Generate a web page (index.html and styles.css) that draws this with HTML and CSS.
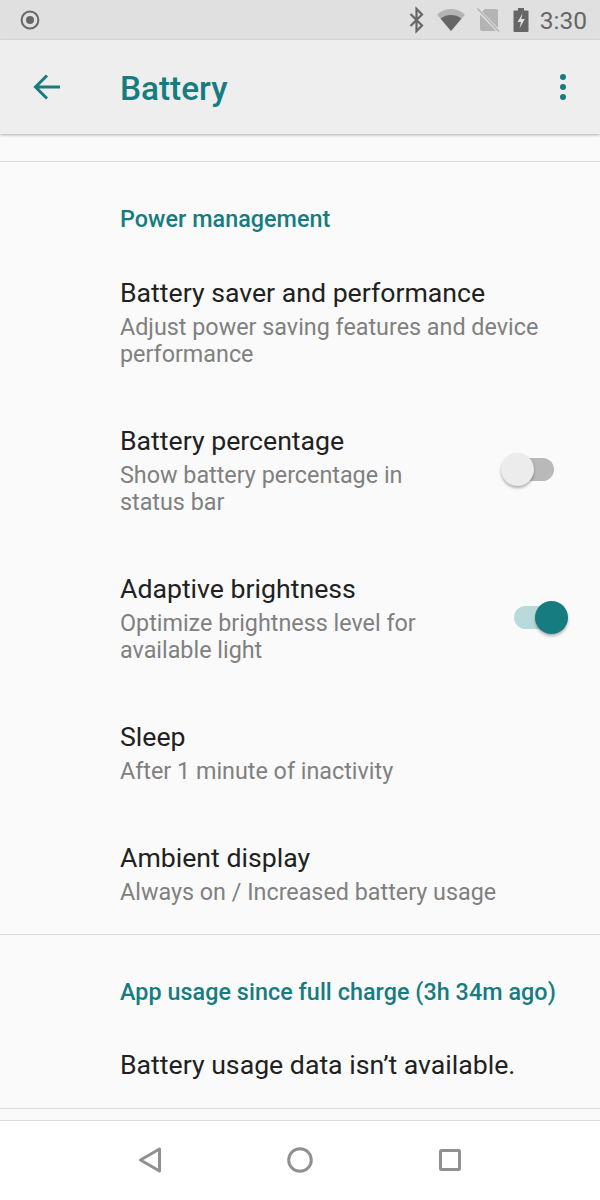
FILE: index.html
```html
<!DOCTYPE html>
<html>
<head>
  <link rel="stylesheet" href="styles.css">
</head>
<body>
  <div class="screen">
    <div class="status-bar">
      <svg class="status-dot" width="24" height="24" viewBox="0 0 24 24">
        <circle cx="12" cy="12" r="8.4" fill="none" stroke="#666" stroke-width="2"/>
        <circle cx="12" cy="12" r="4" fill="#666"/>
      </svg>
      <div class="status-right">
        <svg class="ic-bt" width="20" height="28" viewBox="0 0 20 28">
          <path d="M3.500 8L15 19.500 9.500 25V3L15 8.500 3.500 20" fill="none" stroke="#666" stroke-width="2.200"/>
        </svg>
        <svg class="ic-wifi" width="30" height="24" viewBox="0 0 30 24">
          <path d="M1 6.500C5 3 10 1 15 1s10 2 14 5.500L15 23z" fill="#b4b4b4"/>
          <path d="M4.500 10.500C8 8 11 7 15 7s7 1 10.500 3.500L15 23z" fill="#666"/>
        </svg>
        <svg class="ic-sim" width="24" height="26" viewBox="0 0 24 26">
          <path d="M9 2h11a2 2 0 0 1 2 2v17L6 4.500z M4 7.500l16 16.500H6a2 2 0 0 1-2-2z" fill="#b4b4b4"/>
          <path d="M1.500 1.500L23 24.500" stroke="#b4b4b4" stroke-width="1.500"/>
        </svg>
        <svg width="16" height="26" viewBox="0 0 16 26">
          <path d="M5 1h6v2.500h3.500a1 1 0 0 1 1 1V24a1 1 0 0 1-1 1h-13a1 1 0 0 1-1-1V4.500a1 1 0 0 1 1-1H5z" fill="#666"/>
          <path d="M9.500 6.500L4.500 15H8l-1.500 6.500L11.800 12H8.300z" fill="#e0e0e0"/>
        </svg>
        <span class="status-time">3:30</span>
      </div>
    </div>

    <div class="toolbar">
      <svg class="back" width="30" height="30" viewBox="0 0 30 30">
        <path d="M28 15H4M15 3.500L3.500 15 15 26.500" fill="none" stroke="#167c80" stroke-width="3"/>
      </svg>
      <div class="toolbar-title">Battery</div>
      <div class="overflow"><i></i><i></i><i></i></div>
    </div>

    <div class="content">
      <div class="section first">
        <div class="category">Power management</div>
        <div class="row">
          <div class="row-text wide">
            <div class="row-title">Battery saver and performance</div>
            <div class="row-sub">Adjust power saving features and device performance</div>
          </div>
        </div>
        <div class="row">
          <div class="row-text">
            <div class="row-title">Battery percentage</div>
            <div class="row-sub">Show battery percentage in<br>status bar</div>
          </div>
          <div class="switch off"><div class="track"></div><div class="thumb"></div></div>
        </div>
        <div class="row">
          <div class="row-text">
            <div class="row-title">Adaptive brightness</div>
            <div class="row-sub">Optimize brightness level for<br>available light</div>
          </div>
          <div class="switch on"><div class="track"></div><div class="thumb"></div></div>
        </div>
        <div class="row">
          <div class="row-text">
            <div class="row-title">Sleep</div>
            <div class="row-sub">After 1 minute of inactivity</div>
          </div>
        </div>
        <div class="row">
          <div class="row-text wide">
            <div class="row-title">Ambient display</div>
            <div class="row-sub">Always on / Increased battery usage</div>
          </div>
        </div>
      </div>
      <div class="section last">
        <div class="category">App usage since full charge (3h 34m ago)</div>
        <div class="row-title notice">Battery usage data isn’t available.</div>
      </div>
    </div>

    <div class="nav-bar">
      <svg width="28" height="28" viewBox="0 0 28 28">
        <path d="M23.500 3v22L4.500 14z" fill="none" stroke="#909090" stroke-width="3" stroke-linejoin="round"/>
      </svg>
      <svg width="28" height="28" viewBox="0 0 28 28">
        <circle cx="14" cy="14" r="11.300" fill="none" stroke="#909090" stroke-width="3"/>
      </svg>
      <svg width="28" height="28" viewBox="0 0 28 28">
        <rect x="4.500" y="4.500" width="19" height="19" rx="1" fill="none" stroke="#909090" stroke-width="3"/>
      </svg>
    </div>
  </div>
</body>
</html>
```
FILE: styles.css
```css
* {
  box-sizing: border-box;
}

body {
  margin: 0;
  background: #fafafa;
  font-family: Roboto, "Liberation Sans", sans-serif;
}

.screen {
  width: 600px;
  height: 1200px;
  display: flex;
  flex-direction: column;
  overflow: hidden;
}

.status-bar {
  height: 40px;
  flex: none;
  display: flex;
  align-items: center;
  justify-content: space-between;
  padding: 0 13px 0 18px;
  background: #e0e0e0;
}

.status-right {
  display: flex;
  align-items: center;
  gap: 11px;
}

.ic-bt {
  margin-right: -2px;
}

.ic-wifi {
  margin-right: -1px;
}

.ic-sim {
  margin-right: 2px;
}

.status-time {
  font-size: 24.500px;
  color: #666;
}

.toolbar {
  height: 94px;
  flex: none;
  display: flex;
  align-items: center;
  padding: 0 34px 0 32px;
  background: #eeeeee;
  box-shadow: 0 1px 3px rgba(0,0,0,0.3);
  position: relative;
}

.toolbar-title {
  flex: 1;
  margin-left: 58px;
  font-size: 33.330px;
  font-weight: 500;
  color: #167c80;
  padding-top: 2px;
}

.overflow {
  display: flex;
  flex-direction: column;
  gap: 4px;
}

.overflow i {
  width: 6px;
  height: 6px;
  border-radius: 50%;
  background: #167c80;
}

.content {
  flex: 1;
  padding-top: 27px;
}

.section {
  border-top: 1px solid #dcdcdc;
}

.section.first {
  padding-top: 43px;
}

.section.last {
  padding-top: 43px;
  border-bottom: 1px solid #dcdcdc;
  height: 175px;
}

.category {
  padding-left: 120px;
  font-size: 23.330px;
  line-height: 28px;
  font-weight: 500;
  letter-spacing: 0.05px;
  color: #167c80;
}

.row {
  display: flex;
  align-items: center;
  justify-content: space-between;
  padding: 28px 32px 29px 120px;
}

.row:last-child {
  padding-bottom: 28px;
}

.section.first .category {
  margin-bottom: 16px;
}

.row-text {
  max-width: 370px;
}

.row-text.wide {
  max-width: 440px;
}

.row-title {
  font-size: 26.670px;
  line-height: 33px;
  color: #212121;
}

.row-sub {
  margin-top: 4px;
  font-size: 23.330px;
  line-height: 27px;
  color: #808080;
}

.notice {
  padding-left: 120px;
  margin-top: 43px;
}

.switch {
  position: relative;
  width: 54px;
  height: 34px;
  flex: none;
  margin-top: -2px;
}

.track {
  position: absolute;
  top: 5.500px;
  left: 0;
  right: 0;
  height: 23px;
  border-radius: 12px;
}

.thumb {
  position: absolute;
  top: 0;
  width: 33px;
  height: 33px;
  border-radius: 50%;
  box-shadow: 0 2px 3px rgba(0,0,0,0.3);
}

.switch.off {
  margin-right: 14px;
}

.switch.off .track {
  left: 4px;
  background: #b9b9b9;
}

.switch.off .thumb {
  left: 1px;
  background: #ececec;
}

.switch.on .track {
  background: #b9dadb;
}

.switch.on .thumb {
  right: 0;
  background: #167c80;
}

.nav-bar {
  height: 80px;
  flex: none;
  display: flex;
  align-items: center;
  justify-content: center;
  gap: 122px;
  background: #ffffff;
  border-top: 1px solid #dcdcdc;
  padding-bottom: 1px;
}
```
